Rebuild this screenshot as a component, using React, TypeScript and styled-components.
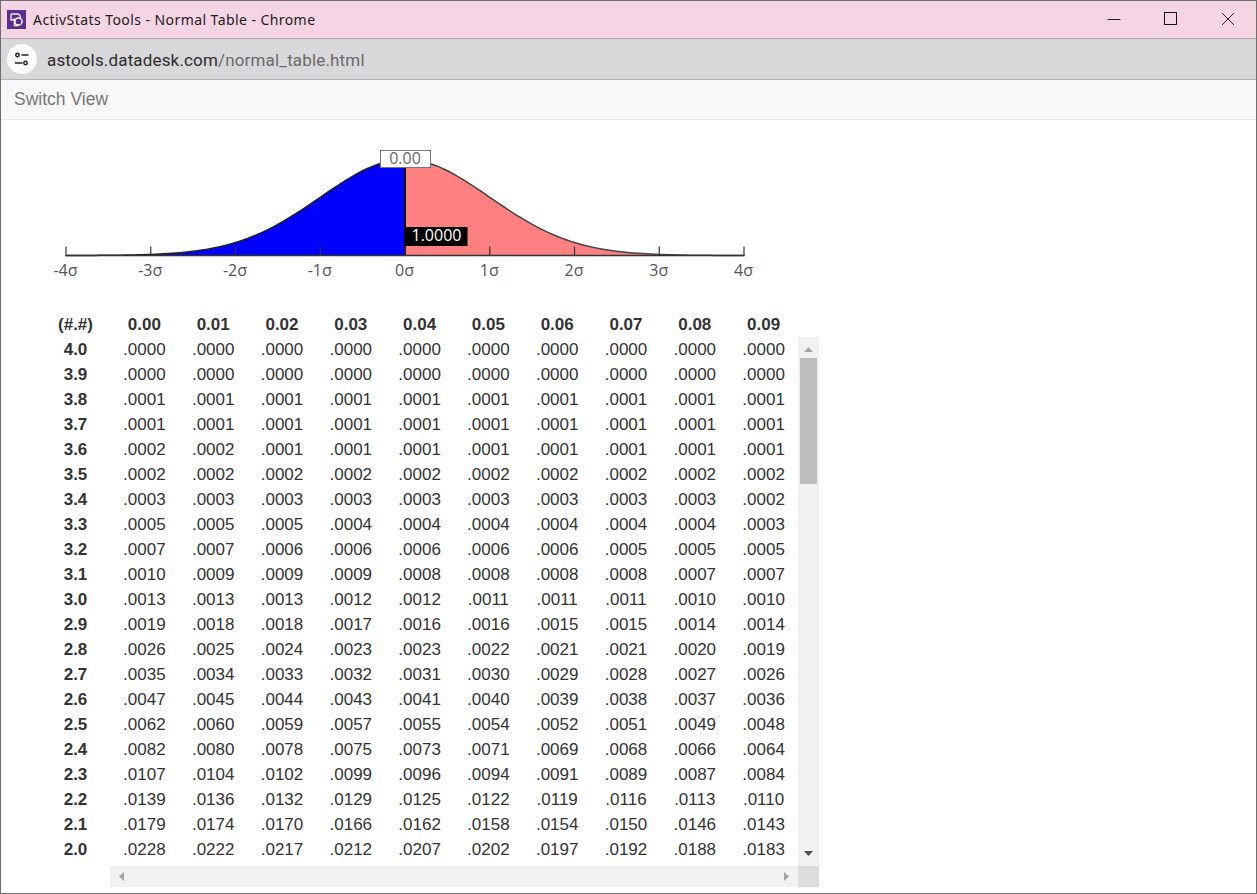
import React from "react";
import styled, { createGlobalStyle } from "styled-components";

const Global = createGlobalStyle`
  html, body { margin: 0; padding: 0; background: #fff; overflow: hidden; }
  * { box-sizing: border-box; }
`;

const Window = styled.div`
  width: 1257px; height: 894px; display: flex; flex-direction: column;
  border: 1px solid #6f6f6f; overflow: hidden; background: #fff;
`;
const TitleBar = styled.div`
  height: 38px; flex: none; display: flex; align-items: center; background: #f5d4e4;
  border-bottom: 1px solid #a9a5a8; padding-left: 6px;
`;
const TitleText = styled.div`
  margin-left: 7px; flex: 1; font: 14px/18px "Noto Sans", sans-serif; color: #1c1c1c; letter-spacing: 0.43px; white-space: nowrap;
`;
const WinButtons = styled.div`
  display: flex; flex: none; align-items: center; height: 100%; margin-bottom: 2px;
`;
const WinButton = styled.div`
  width: 57px; display: flex; justify-content: center; align-items: center;
`;
const AddressBar = styled.div`
  height: 41px; flex: none; display: flex; align-items: center; background: #d8d8da;
  border-bottom: 1px solid #b3b3b5; padding-left: 6px;
`;
const SiteBadge = styled.div`
  width: 30px; height: 30px; border-radius: 50%; background: #fff; display: flex; align-items: center; justify-content: center;
`;
const Url = styled.div`
  margin: 2px 0 0 10px; font: 17px/20px Roboto, sans-serif; color: #2c2c2e; letter-spacing: 0.16px; white-space: nowrap;
`;
const UrlPath = styled.span`
  color: #6a6a6c;
`;
const MenuBar = styled.div`
  height: 40px; flex: none; display: flex; align-items: center; padding: 0 13px 2px; background: #f8f8f8;
  border-bottom: 1px solid #e7e7e7; font: 17.5px/20px "Liberation Sans", sans-serif; color: #777;
`;
const Chart = styled.svg`
  display: block; flex: none; width: 820px; height: 192px;
`;
const AxisText = styled.text`
  font: 16px "Open Sans", sans-serif; fill: #555; text-anchor: middle;
`;
const TagText = styled.text<{ $light?: boolean }>`
  font: 16px "Open Sans", sans-serif; fill: ${(p) => (p.$light ? "#fff" : "#666")}; text-anchor: middle;
`;
const TableArea = styled.div`
  display: flex; padding-left: 40px; font: 17px/25px "Liberation Sans", sans-serif; color: #333;
`;
const LabelColumn = styled.div`
  width: 69px; flex: none; text-align: center; font-weight: 700;
`;
const DataArea = styled.div`
  width: 709px; flex: none;
`;
const HeaderRow = styled.div`
  display: grid; grid-template-columns: repeat(10, 68.8px); height: 25px; font-weight: 700; text-align: center;
`;
const Pane = styled.div`
  display: grid; grid-template-columns: 688px 21px; grid-template-rows: 529px 21px;
`;
const Body = styled.div`
  overflow: hidden;
`;
const Row = styled.div`
  display: grid; grid-template-columns: repeat(10, 68.8px); height: 25px; text-align: center;
`;
const VTrack = styled.div`
  position: relative; background: #f1f1f1; display: flex; flex-direction: column; align-items: center; padding: 0 2px;
`;
const VThumb = styled.div`
  width: 17px; height: 126px; margin-top: 21px; background: #bdbdbd;
`;
const HTrack = styled.div`
  background: #f1f1f1; display: flex; align-items: center; justify-content: space-between; padding: 0 7px;
`;
const Corner = styled.div`
  background: #dcdcdc;
`;
const ArrowSlot = styled.div<{ $pos: "top" | "bottom" }>`
  position: absolute; left: 6px; ${(p) => (p.$pos === "top" ? "top: 8px;" : "bottom: 8px;")} display: flex;
`;

const data: [string, string[]][] = [
  ["4.0", "0000 0000 0000 0000 0000 0000 0000 0000 0000 0000".split(" ")],
  ["3.9", "0000 0000 0000 0000 0000 0000 0000 0000 0000 0000".split(" ")],
  ["3.8", "0001 0001 0001 0001 0001 0001 0001 0001 0001 0001".split(" ")],
  ["3.7", "0001 0001 0001 0001 0001 0001 0001 0001 0001 0001".split(" ")],
  ["3.6", "0002 0002 0001 0001 0001 0001 0001 0001 0001 0001".split(" ")],
  ["3.5", "0002 0002 0002 0002 0002 0002 0002 0002 0002 0002".split(" ")],
  ["3.4", "0003 0003 0003 0003 0003 0003 0003 0003 0003 0002".split(" ")],
  ["3.3", "0005 0005 0005 0004 0004 0004 0004 0004 0004 0003".split(" ")],
  ["3.2", "0007 0007 0006 0006 0006 0006 0006 0005 0005 0005".split(" ")],
  ["3.1", "0010 0009 0009 0009 0008 0008 0008 0008 0007 0007".split(" ")],
  ["3.0", "0013 0013 0013 0012 0012 0011 0011 0011 0010 0010".split(" ")],
  ["2.9", "0019 0018 0018 0017 0016 0016 0015 0015 0014 0014".split(" ")],
  ["2.8", "0026 0025 0024 0023 0023 0022 0021 0021 0020 0019".split(" ")],
  ["2.7", "0035 0034 0033 0032 0031 0030 0029 0028 0027 0026".split(" ")],
  ["2.6", "0047 0045 0044 0043 0041 0040 0039 0038 0037 0036".split(" ")],
  ["2.5", "0062 0060 0059 0057 0055 0054 0052 0051 0049 0048".split(" ")],
  ["2.4", "0082 0080 0078 0075 0073 0071 0069 0068 0066 0064".split(" ")],
  ["2.3", "0107 0104 0102 0099 0096 0094 0091 0089 0087 0084".split(" ")],
  ["2.2", "0139 0136 0132 0129 0125 0122 0119 0116 0113 0110".split(" ")],
  ["2.1", "0179 0174 0170 0166 0162 0158 0154 0150 0146 0143".split(" ")],
  ["2.0", "0228 0222 0217 0212 0207 0202 0197 0192 0188 0183".split(" ")],
];
const headers = ["0.00", "0.01", "0.02", "0.03", "0.04", "0.05", "0.06", "0.07", "0.08", "0.09"];

// Chart coordinates are relative to the svg, whose origin sits at page (1, 120).
const X0 = 404;
const UNIT = 84.75;
const BASE = 135.5;
const PEAK = 96;
const curveY = (z: number) => BASE - PEAK * Math.exp((-z * z) / 2);
const curve = (from: number, to: number) => {
  const pts: string[] = [];
  for (let z = from; z <= to + 1e-6; z += 0.05) {
    pts.push(`${(X0 + z * UNIT).toFixed(2)},${curveY(z).toFixed(2)}`);
  }
  return pts;
};
const ticks = [-4, -3, -2, -1, 0, 1, 2, 3, 4];

function NormalChart() {
  const left = curve(-4, 0);
  const right = curve(0, 4);
  return (
    <Chart viewBox="0 0 820 192">
      <polygon points={`${X0 - 4 * UNIT},${BASE} ${left.join(" ")} ${X0},${BASE}`} fill="#0000ff" />
      <polygon points={`${X0},${BASE} ${right.join(" ")} ${X0 + 4 * UNIT},${BASE}`} fill="#ff8080" />
      <polyline points={left.join(" ")} fill="none" stroke="#222" strokeWidth="1.5" />
      <polyline points={right.join(" ")} fill="none" stroke="#444" strokeWidth="1.5" />
      <line x1={X0} x2={X0} y1={BASE} y2={40} stroke="#000" strokeWidth="2" />
      <line x1={X0 - 4 * UNIT - 0.7} x2={X0 + 4 * UNIT + 0.7} y1={BASE} y2={BASE} stroke="#333" strokeWidth="1.5" />
      {ticks.map((t) => (
        <g key={t}>
          <line x1={X0 + t * UNIT} x2={X0 + t * UNIT} y1={BASE} y2={BASE - 9} stroke="#333" strokeWidth="1.2" />
          <AxisText x={X0 + t * UNIT - 0.5} y={156}>{`${t}σ`}</AxisText>
        </g>
      ))}
      <rect x={379.5} y={30.5} width={50} height={17} fill="#fff" stroke="#777" />
      <TagText x={404} y={44}>0.00</TagText>
      <rect x={405} y={107} width={61.5} height={19} fill="#000" />
      <TagText x={435.5} y={121} $light>1.0000</TagText>
    </Chart>
  );
}

const Triangle = ({ d, fill }: { d: string; fill: string }) => (
  <svg width="9" height="9" viewBox="0 0 9 9"><path d={d} fill={fill} /></svg>
);

export default function App() {
  return (
    <Window>
      <Global />
      <TitleBar>
        <svg width="19" height="19" viewBox="0 0 19 19">
          <rect width="19" height="19" fill="#5b2d8e" />
          <path d="M4 4h6c3 0 3.500 2 3.500 4" fill="none" stroke="#e9e0f2" strokeWidth="1.400" />
          <path d="M4 4v6h3" fill="none" stroke="#e9e0f2" strokeWidth="1.400" />
          <circle cx="11.500" cy="11.500" r="3.600" fill="none" stroke="#fff" strokeWidth="1.500" />
          <path d="M7.500 8.500v7h4" fill="none" stroke="#fff" strokeWidth="1.500" />
        </svg>
        <TitleText>ActivStats Tools - Normal Table - Chrome</TitleText>
        <WinButtons>
          <WinButton>
            <svg width="14" height="14" viewBox="0 0 14 14"><path d="M0.500 7.500h13" stroke="#222" strokeWidth="1" /></svg>
          </WinButton>
          <WinButton>
            <svg width="14" height="14" viewBox="0 0 14 14"><rect x="0.500" y="0.500" width="12" height="12" fill="none" stroke="#111" strokeWidth="1" /></svg>
          </WinButton>
          <WinButton>
            <svg width="14" height="14" viewBox="0 0 14 14"><path d="M1 1l12 12M13 1L1 13" stroke="#222" strokeWidth="1" /></svg>
          </WinButton>
        </WinButtons>
      </TitleBar>
      <AddressBar>
        <SiteBadge>
          <svg width="16" height="16" viewBox="0 0 16 16" fill="none" stroke="#222" strokeWidth="1.500">
            <circle cx="3.500" cy="4" r="1.700" />
            <path d="M7.500 4h7" />
            <circle cx="11.500" cy="12" r="1.700" />
            <path d="M1 12h7.500" />
          </svg>
        </SiteBadge>
        <Url>
          astools.datadesk.com<UrlPath>/normal_table.html</UrlPath>
        </Url>
      </AddressBar>
      <MenuBar>Switch View</MenuBar>
      <NormalChart />
      <TableArea>
        <LabelColumn>
          <div>(#.#)</div>
          {data.map(([label]) => (
            <div key={label}>{label}</div>
          ))}
        </LabelColumn>
        <DataArea>
          <HeaderRow>
            {headers.map((h) => (
              <div key={h}>{h}</div>
            ))}
          </HeaderRow>
          <Pane>
            <Body>
              {data.map(([label, vals]) => (
                <Row key={label}>
                  {vals.map((v, i) => (
                    <div key={i}>.{v}</div>
                  ))}
                </Row>
              ))}
            </Body>
            <VTrack>
              <ArrowSlot $pos="top"><Triangle d="M4.500 2L9 7H0z" fill="#a3a3a3" /></ArrowSlot>
              <VThumb />
              <ArrowSlot $pos="bottom"><Triangle d="M0 2h9L4.500 7z" fill="#505050" /></ArrowSlot>
            </VTrack>
            <HTrack>
              <Triangle d="M7 0v9L2 4.500z" fill="#a3a3a3" />
              <Triangle d="M2 0v9l5-4.500z" fill="#a3a3a3" />
            </HTrack>
            <Corner />
          </Pane>
        </DataArea>
      </TableArea>
    </Window>
  );
}
